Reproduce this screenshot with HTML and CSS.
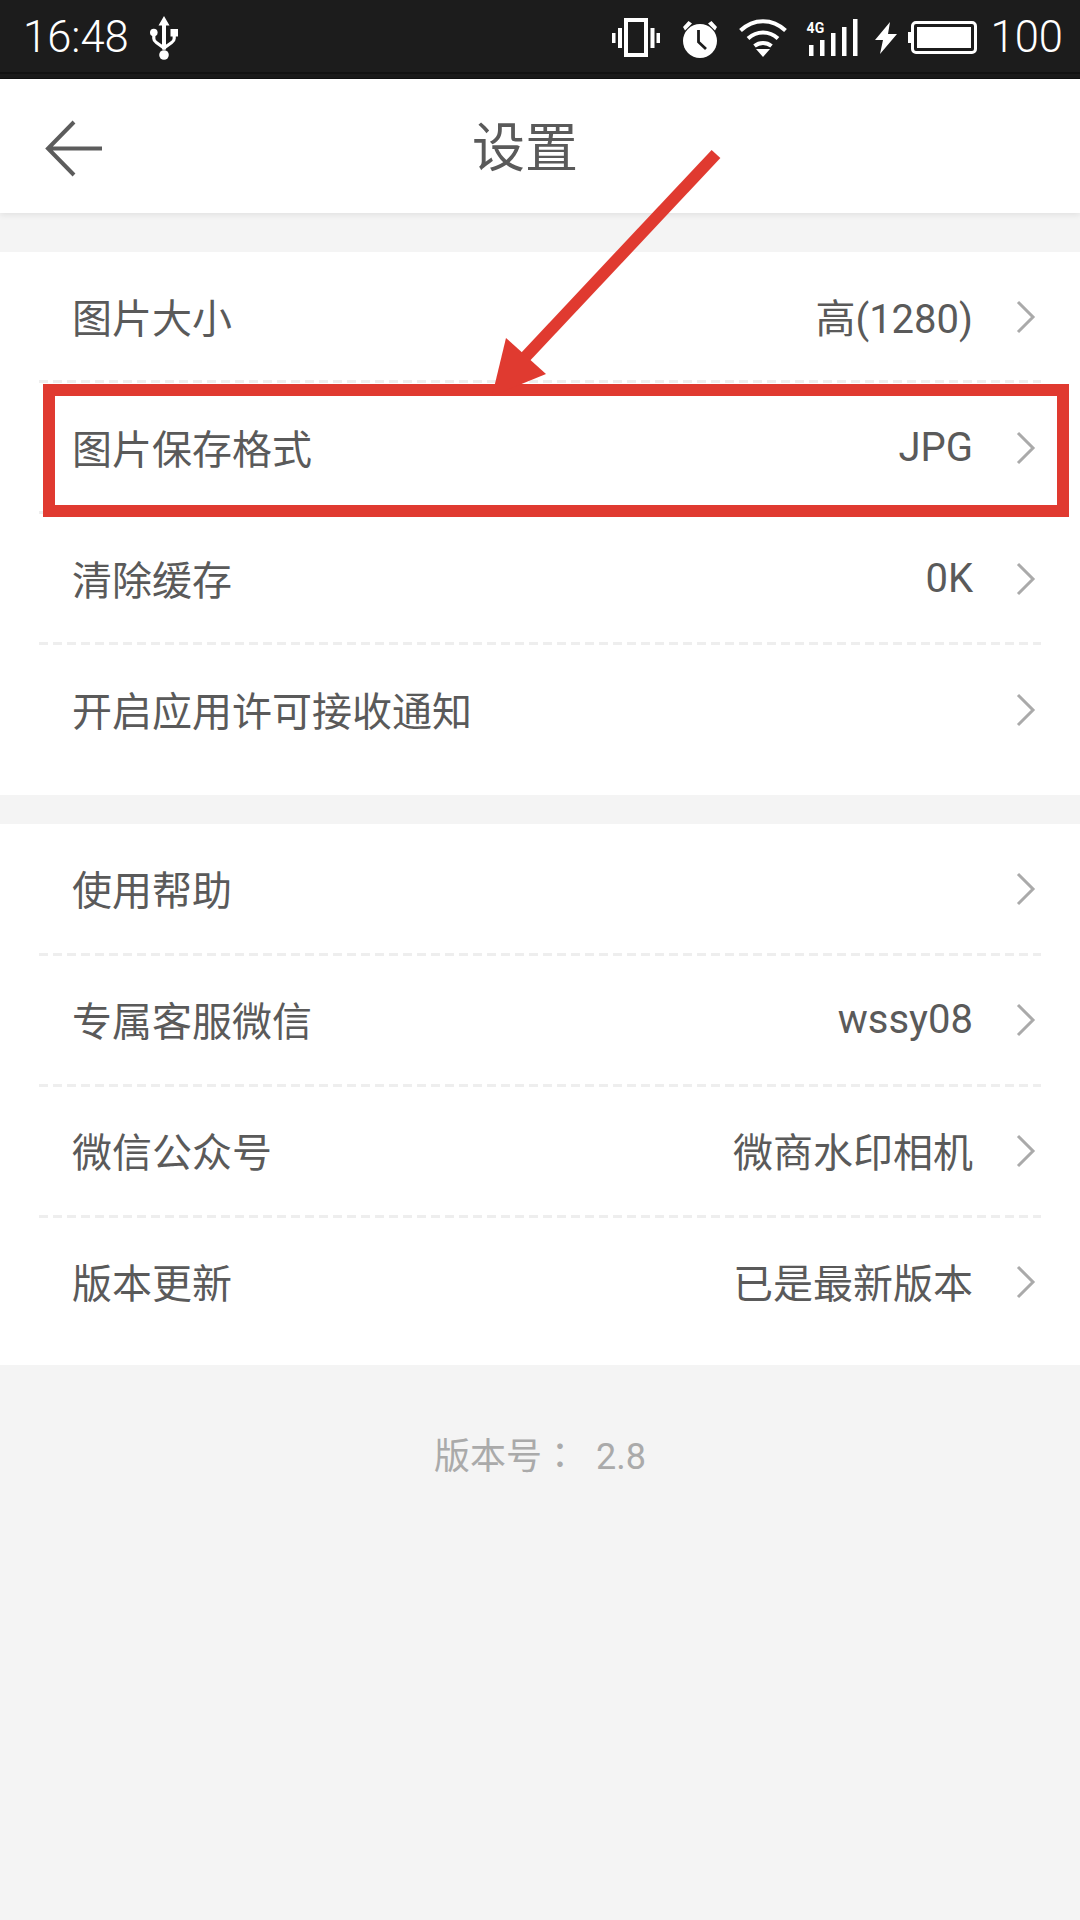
FILE: index.html
```html
<!DOCTYPE html>
<html lang="zh-CN">
<head>
  <meta charset="UTF-8" />
  <meta name="viewport" content="width=device-width, initial-scale=1.0" />
  <title>设置</title>
  <link rel="stylesheet" href="styles.css">
</head>
<body>

<div class="statusbar">
  <span class="clock">16:48</span>
  <svg class="usb" width="28" height="44" viewBox="0 0 28 44">
    <path d="M14 0l5.500 9.500h-3.500v24h-4v-24H8.500z" fill="#fff"/>
    <circle cx="14" cy="39" r="4.800" fill="#fff"/>
    <circle cx="3.800" cy="16.500" r="3.800" fill="#fff"/>
    <rect x="20.500" y="13" width="7.500" height="7.500" fill="#fff"/>
    <path d="M3.800 18v4.500c0 2 1 3 2.500 4l7.700 5.500 7.700-5.500c1.500-1 2.500-2 2.500-4V18" fill="none" stroke="#fff" stroke-width="3.200"/>
  </svg>
  <div class="status-right">
    <svg width="48" height="39" viewBox="0 0 48 39">
      <rect x="14" y="2" width="20" height="35" fill="none" stroke="#fff" stroke-width="4"/>
      <path d="M0 15h3.500v10H0zM6 10h4v20H6zM38.500 10h4v20h-4zM44.500 15H48v10h-3.500z" fill="#fff"/>
    </svg>
    <svg class="gap-alarm" width="36" height="38" viewBox="0 0 36 38">
      <circle cx="18" cy="21" r="17" fill="#fff"/>
      <path d="M16.500 10v12l7.500 7" fill="none" stroke="#1c1c1c" stroke-width="2.800"/>
      <path d="M1 7l5.500-6 3.500 2.500-7 7zM35 7l-5.500-6L26 3.500l7 7z" fill="#fff"/>
    </svg>
    <svg class="gap-wifi" width="48" height="38" viewBox="0 0 48 38">
      <path d="M1.500 11.500c13-12.500 32-12.500 45 0M9 19.500c9-8 21-8 30 0M15.500 27c5-4 12-4 17 0" fill="none" stroke="#fff" stroke-width="4"/>
      <path d="M17 30h14l-7 8z" fill="#fff"/>
    </svg>
    <div class="signal gap-signal">
      <span class="net">4G</span>
      <svg width="51" height="37" viewBox="0 0 51 37">
        <path d="M2 26h4.500v11H2zM13 21h4.500v16H13zM24 14h4.500v23H24zM35 8h4.500v29H35zM46 0h4.500v37H46z" fill="#fff"/>
      </svg>
    </div>
    <svg class="gap-bolt" width="22" height="32" viewBox="0 0 22 32">
      <path d="M15 0L0 18h8L5 32l17-20h-9z" fill="#fff"/>
    </svg>
    <div class="battery"><i></i></div>
    <span class="level">100</span>
  </div>
</div>

<header>
  <svg class="back" width="58" height="58" viewBox="0 0 58 58">
    <path d="M57 28.500H3M29 2L3 28.500 29 55" fill="none" stroke="#5c5c5c" stroke-width="4"/>
  </svg>
  <h1>设置</h1>
</header>

<div class="group first">
  <div class="row"><span class="name">图片大小</span><span class="value">高(1280)</span><svg class="chev" width="20" height="34" viewBox="0 0 20 34"><path d="M2 2l15 15L2 32" fill="none" stroke="#aaa" stroke-width="3"/></svg></div>
  <div class="row"><span class="name">图片保存格式</span><span class="value">JPG</span><svg class="chev" width="20" height="34" viewBox="0 0 20 34"><path d="M2 2l15 15L2 32" fill="none" stroke="#aaa" stroke-width="3"/></svg></div>
  <div class="row"><span class="name">清除缓存</span><span class="value">0K</span><svg class="chev" width="20" height="34" viewBox="0 0 20 34"><path d="M2 2l15 15L2 32" fill="none" stroke="#aaa" stroke-width="3"/></svg></div>
  <div class="row"><span class="name">开启应用许可接收通知</span><svg class="chev" width="20" height="34" viewBox="0 0 20 34"><path d="M2 2l15 15L2 32" fill="none" stroke="#aaa" stroke-width="3"/></svg></div>
</div>

<div class="group second">
  <div class="row"><span class="name">使用帮助</span><svg class="chev" width="20" height="34" viewBox="0 0 20 34"><path d="M2 2l15 15L2 32" fill="none" stroke="#aaa" stroke-width="3"/></svg></div>
  <div class="row"><span class="name">专属客服微信</span><span class="value">wssy08</span><svg class="chev" width="20" height="34" viewBox="0 0 20 34"><path d="M2 2l15 15L2 32" fill="none" stroke="#aaa" stroke-width="3"/></svg></div>
  <div class="row"><span class="name">微信公众号</span><span class="value">微商水印相机</span><svg class="chev" width="20" height="34" viewBox="0 0 20 34"><path d="M2 2l15 15L2 32" fill="none" stroke="#aaa" stroke-width="3"/></svg></div>
  <div class="row"><span class="name">版本更新</span><span class="value">已是最新版本</span><svg class="chev" width="20" height="34" viewBox="0 0 20 34"><path d="M2 2l15 15L2 32" fill="none" stroke="#aaa" stroke-width="3"/></svg></div>
</div>

<p class="version">版本号<span class="colon" lang="zh-TW">：</span>&nbsp;&nbsp;2.8</p>

<!-- red markup drawn on top of the list -->
<div class="mark-box"></div>
<svg class="mark-arrow" width="1080" height="420" viewBox="0 0 1080 420">
  <path d="M716 154L515 368" fill="none" stroke="#e03a30" stroke-width="12"/>
  <path d="M492 396L506 338 546 374z" fill="#e03a30"/>
</svg>

</body>
</html>
```

FILE: styles.css
```css
* {
  box-sizing: border-box;
}

html, body {
  margin: 0;
  padding: 0;
}

body {
  position: relative;
  width: 1080px;
  height: 1920px;
  overflow: hidden;
  background: #f4f4f4;
  color: #5a5a5a;
  font-family: Roboto, "Noto Sans CJK SC", sans-serif;
}

/* thin dark line near the bottom edge of the bar */
.statusbar {
  display: flex;
  align-items: center;
  height: 79px;
  padding: 0 17px 3px 23px;
  background: linear-gradient(#1c1c1c 0 72px, #121212 72px 74px, #1a1a1a 74px);
  border-bottom: 1px solid #111;
  color: #fff;
}

.clock, .level {
  font-size: 43.5px;
  font-weight: 300;
  line-height: 1;
}

.usb {
  margin-left: 21px;
}

.status-right {
  display: flex;
  align-items: center;
  margin-left: auto;
}

.gap-alarm {
  margin-left: 22px;
  margin-top: 2px;
}

.gap-wifi {
  margin-left: 21px;
}

.gap-signal {
  margin-left: 20px;
}

.gap-bolt {
  margin-left: 17px;
}

.signal {
  position: relative;
  display: flex;
}

.net {
  position: absolute;
  left: 0;
  top: 2px;
  font-size: 14px;
  font-weight: 700;
  line-height: 1;
}

.battery {
  position: relative;
  width: 66px;
  height: 33px;
  margin-left: 14px;
  border: 3px solid #fff;
  border-radius: 5px;
  padding: 3px;
}

.battery::before {
  content: "";
  position: absolute;
  left: -6px;
  top: 8px;
  width: 3px;
  height: 11px;
  background: #fff;
}

.battery i {
  display: block;
  height: 100%;
  background: #fff;
}

.level {
  margin-left: 14px;
}

header {
  position: relative;
  display: flex;
  align-items: center;
  justify-content: center;
  height: 134px;
  padding: 0 30px 4px 0;
  background: #fff;
  box-shadow: 0 2px 6px rgba(0,0,0,0.08);
}

header h1 {
  margin: 0;
  font-size: 53px;
  font-weight: 400;
}

.back {
  position: absolute;
  left: 45px;
  top: 41px;
}

.group {
  background: #fff;
}

.first {
  margin-top: 39px;
  height: 543px;
}

.second {
  margin-top: 29px;
  height: 541px;
  padding-top: 1px;
}

/* dashes are wider apart than a dashed border would draw them */
.row {
  display: flex;
  align-items: center;
  height: 131px;
  margin: 0 39px;
  padding: 0 5px 3px 33px;
  background: repeating-linear-gradient(90deg, #eee 0 9px, transparent 9px 14px) left bottom / 100% 3px no-repeat;
  font-size: 40px;
}

.second .row {
  padding-bottom: 5px;
}

.row:last-child {
  background: none;
}

.value {
  margin-left: auto;
}

.chev {
  margin: 2px 0 0 43px;
}

.name + .chev {
  margin-left: auto;
}

.version {
  margin: 62px 0 0;
  text-align: center;
  font-size: 36px;
  color: #aaa;
}

.colon {
  font-family: "Noto Sans CJK TC", sans-serif;
}

.mark-box {
  position: absolute;
  left: 43px;
  top: 384px;
  width: 1026px;
  height: 133px;
  border: 12px solid #e03a30;
}

.mark-arrow {
  position: absolute;
  left: 0;
  top: 0;
}
```
